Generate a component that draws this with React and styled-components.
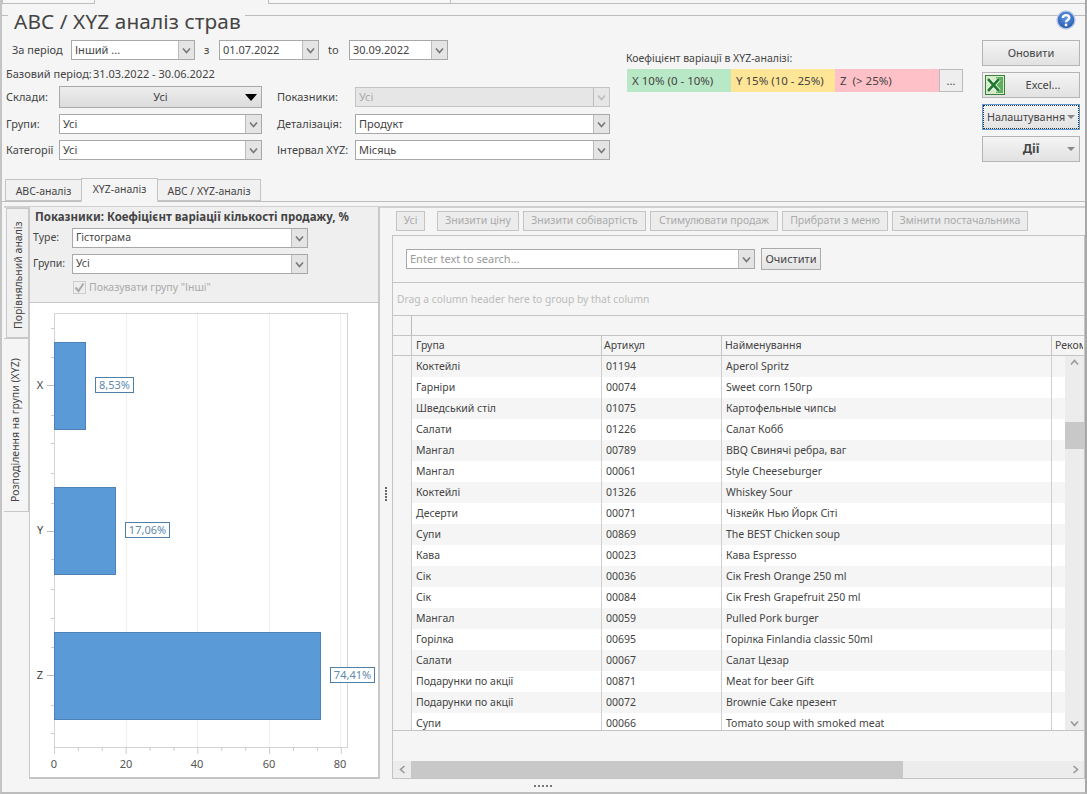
import React from "react";
import styled, { createGlobalStyle } from "styled-components";

const Global = createGlobalStyle`
  html, body { margin: 0; padding: 0; background: #f5f5f5; }
  body { font-family: "Noto Sans", "Liberation Sans", sans-serif; font-size: 11px; color: #444; }
  * { box-sizing: border-box; }
`;

const Page = styled.div`
  position: relative; width: 1087px; height: 794px; overflow: hidden; background: #f5f5f5;
  border-left: 2px solid #c4c4c4; border-right: 2px solid #a8a8a8; border-bottom: 2px solid #bdbdbd;
  display: flex; flex-direction: column;
`;
const TopStub = styled.div`height: 4px; display: flex;`;
const StubTab = styled.div`
  height: 4px; width: ${p => p.$w}px; margin-left: ${p => p.$ml || 0}px;
  border: 1px solid #bdbdbd; border-top: 0; background: #f7f7f7;
`;
const StubLine = styled.div`flex: 1; height: 4px; border-bottom: 1px solid #bdbdbd;`;
const Frame = styled.section`
  margin-top: 11px; border-top: 1px solid #bdbdbd; height: 164px; display: flex; flex-direction: column;
`;
const Title = styled.h1`
  margin: -9px 0 0 6px; padding: 0 4px 0 6px; width: fit-content; background: #f5f5f5;
  font-size: 20.8px; font-weight: 400; line-height: 28px; height: 28px; color: #444; letter-spacing: .1px;
  font-family: "Noto Sans", sans-serif;
`;
const Help = styled.svg`position: absolute; right: 9px; top: 10px;`;
const Top = styled.div`display: flex; padding-top: 5px;`;
const FormCol = styled.div`width: 624px; padding-left: 4px; display: flex; flex-direction: column;`;
const PeriodRow = styled.div`display: flex; align-items: center; height: 20px; padding-left: 6px;`;
const Lab = styled.span`
  width: ${p => p.$w}px; flex: none; white-space: nowrap; padding-left: ${p => p.$pl || 0}px; padding-bottom: 2px;
  margin-left: ${p => p.$ml || 0}px;
`;
const BaseRow = styled.div`display: flex; height: 14px; margin-top: 7px; align-items: center;`;
const FormGrid = styled.div`
  display: grid; grid-template-columns: 53px 203px 15px 78px 255px; grid-template-rows: 22px 20px 20px;
  row-gap: 6px; align-items: center; margin-top: 5px;
`;
const ComboBox = styled.div`
  width: ${p => (p.$w ? p.$w + "px" : "100%")}; height: 20px; display: flex; flex: none;
  border: 1px solid ${p => (p.$off ? "#c4c4c4" : "#a8a8a8")}; background: ${p => (p.$off ? "#e6e6e6" : "#fff")};
  color: ${p => (p.$off ? "#aaa" : p.$hint ? "#999" : "#444")};
`;
const ComboText = styled.span`flex: 1; padding-left: 3px; line-height: 17px; white-space: nowrap; overflow: hidden;`;
const ComboArrow = styled.span`
  width: 16px; flex: none; display: flex; align-items: center; justify-content: center;
  background: ${p => (p.$off ? "#e6e6e6" : "#e4e4e4")}; border-left: 1px solid #bbb;
`;
const Chev = ({ dir = "down", color = "#777" }) => (
  <svg width="9" height="9" viewBox="0 0 9 9">
    <path
      d={{ down: "M1 2.5 L4.5 6.5 L8 2.5", up: "M1 6.5 L4.5 2.5 L8 6.5", left: "M6.5 1 L2.5 4.5 L6.5 8", right: "M2.5 1 L6.5 4.5 L2.5 8" }[dir]}
      fill="none" stroke={color} strokeWidth="1.6"
    />
  </svg>
);
const Combo = ({ children, w, off, hint }) => (
  <ComboBox $w={w} $off={off} $hint={hint}>
    <ComboText>{children}</ComboText>
    <ComboArrow $off={off}><Chev color={off ? "#bbb" : "#777"} /></ComboArrow>
  </ComboBox>
);
const DropBtn = styled.div`
  height: 22px; border: 1px solid #a8a8a8; background: linear-gradient(#ededed, #dcdcdc);
  display: flex; align-items: center; justify-content: center; position: relative; padding-bottom: 1px;
`;
const BlackTri = styled.i`
  position: absolute; right: 4px; top: 7px; border: 6px solid transparent; border-top: 7px solid #000; border-bottom: 0;
`;
const LegendCol = styled.div`width: 356px; padding-top: 12px; flex: none;`;
const LegendLabel = styled.div`height: 17px; line-height: 13px; font-size: 10.5px;`;
const LegendBar = styled.div`display: flex; height: 23px; width: 337px; margin-left: 1px;`;
const LegendCell = styled.div`
  width: 104px; background: ${p => p.$bg}; line-height: 23px; padding-left: 5px; white-space: pre; font-size: 11.5px;
`;
const Dots = styled.div`
  width: 24px; border: 1px solid #bbb; background: #eee; text-align: center; line-height: 22px;
`;
const ButtonCol = styled.div`width: 98px; flex: none; display: flex; flex-direction: column; gap: 6px;`;
const Btn = styled.div`
  height: 26px; position: relative; display: flex; align-items: center; justify-content: center; padding-bottom: 2px;
  background: linear-gradient(#f4f4f4, #e2e2e2); border: 1px solid ${p => (p.$focus ? "#5b9bd5" : "#b4b4b4")};
  font-weight: ${p => (p.$bold ? 700 : 400)}; font-size: ${p => (p.$bold ? 12 : p.$focus ? 10.8 : 11)}px;
  ${p => p.$focus && "outline: 1px dotted #333; outline-offset: -2px;"}
  ${p => p.$pad && "justify-content: flex-start; padding-left: 4px;"}
`;
const SmallTri = styled.i`
  position: absolute; right: 4px; top: 10px; border: 4px solid transparent; border-top: 4px solid #888; border-bottom: 0;
`;
const ExcelIcon = styled.svg`position: absolute; left: 2px; top: 2px;`;
const ExcelText = styled.span`padding-left: 24px;`;
const TabStrip = styled.div`
  height: 23px; display: flex; align-items: flex-end; padding-left: 3px; border-bottom: 1px solid #bdbdbd;
`;
const Tab = styled.div`
  height: ${p => (p.$on ? 24 : 22)}px; width: ${p => p.$w}px; border: 1px solid #c4c4c4; margin-bottom: ${p => (p.$on ? -1 : 0)}px;
  background: ${p => (p.$on ? "#f5f5f5" : "#f1f1f1")}; border-bottom-color: ${p => (p.$on ? "#f5f5f5" : "#c4c4c4")};
  text-align: center; line-height: ${p => (p.$on ? 21 : 22)}px; white-space: nowrap; margin-left: ${p => p.$ml || 0}px; font-size: 10.5px;
`;
const Body = styled.div`
  margin: 4px 0 0 2px; border-top: 2px solid #d0d0d0; height: 573px; display: flex;
`;
const VTabs = styled.div`width: 25px; flex: none; display: flex; flex-direction: column;`;
const VTab = styled.div`
  height: ${p => p.$h}px; width: ${p => (p.$on ? 25 : 23)}px; margin-left: ${p => (p.$on ? 0 : 2)}px;
  border: 1px solid #c8c8c8; border-right: ${p => (p.$on ? "0" : "1px solid #c8c8c8")};
  background: ${p => (p.$on ? "#f5f5f5" : "#f0f0f0")}; padding-bottom: ${p => p.$shift}px;
  writing-mode: vertical-rl; transform: rotate(180deg); text-align: center; line-height: 22px; white-space: nowrap;
  font-size: 10.5px;
`;
const LeftPanel = styled.div`
  width: 351px; height: 572px; flex: none; display: flex; flex-direction: column; border-right: 2px solid #c8c8c8; border-left: 1px solid #c8c8c8;
  border-bottom: 2px solid #c4c4c4; background: #efefef; margin-top: -1px; font-size: 10.5px;
`;
const PanelHead = styled.div`height: 96px; padding-left: 5px; border-bottom: 1px solid #c8c8c8; flex: none;`;
const PanelTitle = styled.div`font-weight: 700; height: 21px; line-height: 20px; font-size: 11.5px; white-space: nowrap;`;
const TypeRow = styled.div`display: flex; align-items: center; height: 20px; margin-bottom: 6px;`;
const CheckRow = styled.div`display: flex; align-items: center; gap: 3px; padding-left: 38px; color: #aaa; height: 14px; margin-top: 3px; white-space: nowrap;`;
const CheckBox = styled.span`
  width: 13px; height: 13px; border: 1px solid #ccc; background: #eee; display: flex; align-items: center; justify-content: center;
`;
const ChartWrap = styled.div`flex: 1; background: #fff; min-height: 0; overflow: hidden;`;
const Splitter = styled.div`width: 12px; flex: none; display: flex; align-items: center; justify-content: center;`;
const Dotted = styled.div`
  width: 2px; height: 14px; background: repeating-linear-gradient(#666 0 2px, transparent 2px 3px);
`;
const RightPane = styled.div`flex: 1; min-width: 0; height: 571px; display: flex; flex-direction: column; font-size: 10.5px;`;
const ActionBar = styled.div`display: flex; height: 27px; flex: none; padding: 3px 0 0 4px;`;
const ActBtn = styled.div`
  height: 20px; width: ${p => p.$w}px; margin-left: ${p => p.$ml || 0}px; flex: none; border: 1px solid #c4c4c4;
  background: #ececec; color: #aaa; text-align: center; line-height: 17px; white-space: nowrap;
`;
const GridFrame = styled.div`
  flex: 1; border: 1px solid #c4c4c4; display: flex; flex-direction: column; min-height: 0;
`;
const SearchRow = styled.div`
  height: 47px; flex: none; display: flex; align-items: flex-start; gap: 6px; padding: 13px 0 0 13px; border-bottom: 1px solid #c4c4c4; font-size: 11px;
`;
const ClearBtn = styled.div`
  width: 60px; height: 22px; margin-top: -1px; border: 1px solid #aaa; background: linear-gradient(#f4f4f4, #e4e4e4);
  text-align: center; line-height: 19px;
`;
const GroupPanel = styled.div`
  height: 33px; flex: none; padding-left: 4px; line-height: 33px; color: #bbb; border-bottom: 1px solid #c4c4c4; font-size: 10.3px;
`;
const BandRow = styled.div`height: 20px; flex: none; padding-left: 18px; border-bottom: 1px solid #c4c4c4;`;
const BandInner = styled.div`height: 100%; border-left: 1px solid #bbb;`;
const HeadRow = styled.div`
  height: 20px; flex: none; display: flex; padding-left: 18px; border-bottom: 1px solid #c4c4c4; overflow: hidden;
`;
const HeadCell = styled.div`
  width: ${p => p.$w}px; flex: none; border-left: 1px solid #c4c4c4; padding-left: ${p => p.$pl || 4}px; line-height: 18px; white-space: nowrap; overflow: hidden;
`;
const GridBody = styled.div`height: 375px; flex: none; display: flex; padding-left: 18px; border-bottom: 1px solid #c4c4c4; overflow: hidden;`;
const Rows = styled.div`width: 654px; flex: none; overflow: hidden;`;
const Row = styled.div`
  height: 21px; display: flex; background: ${p => (p.$odd ? "#f5f5f5" : "#fff")}; white-space: nowrap;
`;
const Cell = styled.div`
  width: ${p => p.$w}px; flex: none; border-left: 1px solid #cfcfcf; padding-left: 4px; line-height: 20px; overflow: hidden;
`;
const VScroll = styled.div`flex: 1; background: #ececec; position: relative; display: flex; flex-direction: column; align-items: center; justify-content: space-between; padding: 2px 0;`;
const VThumb = styled.div`position: absolute; left: 0; right: 0; top: 66px; height: 27px; background: #c8c8c8;`;
const HGap = styled.div`flex: 1;`;
const HScroll = styled.div`height: 17px; flex: none; background: #ececec; display: flex; align-items: center;`;
const HArrow = styled.div`width: 18px; flex: none; display: flex; justify-content: center;`;
const HThumb = styled.div`width: 492px; height: 100%; background: #c8c8c8; flex: none;`;
const BottomGrip = styled.div`flex: 1; display: flex; justify-content: center; padding-top: 6px;`;
const HDots = styled.div`
  width: 19px; height: 2px; background: repeating-linear-gradient(90deg, #777 0 2px, transparent 2px 4px);
`;

const rows = [
  ["Коктейлі", "01194", "Aperol Spritz"], ["Гарніри", "00074", "Sweet corn  150гр"], ["Шведський стіл", "01075", "Картофельные чипсы"],
  ["Салати", "01226", "Салат Кобб"], ["Мангал", "00789", "BBQ Свинячі ребра, ваг"], ["Мангал", "00061", "Style Cheeseburger"],
  ["Коктейлі", "01326", "Whiskey Sour"], ["Десерти", "00071", "Чізкейк Нью Йорк Сіті"], ["Супи", "00869", "The BEST Chicken soup"],
  ["Кава", "00023", "Кава Espresso"], ["Сік", "00036", "Сік Fresh Orange 250 ml"], ["Сік", "00084", "Сік Fresh Grapefruit 250 ml"],
  ["Мангал", "00059", "Pulled Pork burger"], ["Горілка", "00695", "Горілка Finlandia classic 50ml"], ["Салати", "00067", "Салат Цезар"],
  ["Подарунки по акції", "00871", "Meat for beer Gift"], ["Подарунки по акції", "00072", "Brownie Cake презент"], ["Супи", "00066", "Tomato soup with smoked meat"],
];

const bars = [
  { l: "X", y: 39, w: 31, v: "8,53%", bx: 65, bw: 38 },
  { l: "Y", y: 184, w: 61, v: "17,06%", bx: 95, bw: 44 },
  { l: "Z", y: 329, w: 266, v: "74,41%", bx: 300, bw: 44 },
];
const xs = [[24, "0"], [96, "20"], [167, "40"], [239, "60"], [310, "80"]];
const leftTicks = [25, 54, 82, 112, 140, 170, 200, 228, 256, 286, 315, 344, 372, 402, 430];

const Chart = () => (
  <svg width="348" height="474" viewBox="0 0 348 474" style={{ display: "block" }} fontFamily="Noto Sans, sans-serif" fontSize="11">
    <rect x="24.5" y="10.5" width="293" height="434" fill="#fff" stroke="#d4d4d4" />
    {xs.slice(1).map(([x]) => <line key={x} x1={x + .5} x2={x + .5} y1="11" y2="444" stroke="#efefef" />)}
    {leftTicks.map(y => <line key={y} x1="21" x2="24" y1={y + .5} y2={y + .5} stroke="#ccc" />)}
    {[82, 228, 372].map(y => <line key={y} x1="17" x2="24" y1={y + .5} y2={y + .5} stroke="#bbb" />)}
    {Array.from({ length: 13 }).map((_, i) => {
      const x = 24 + i * 23.9;
      return <line key={i} x1={x + .5} x2={x + .5} y1="444" y2={i % 3 === 0 ? 451 : 448} stroke="#ccc" />;
    })}
    {bars.map(b => (
      <g key={b.l}>
        <rect x="24.5" y={b.y + .5} width={b.w} height="87" fill="#5a9ad6" stroke="#4f82b4" />
        <text x="10" y={b.y + 47} textAnchor="middle" fill="#444">{b.l}</text>
        <rect x={b.bx + .5} y={b.y + 35.5} width={b.bw} height="15" fill="#fff" stroke="#4f7fa6" />
        <text x={b.bx + b.bw / 2 + .5} y={b.y + 47} textAnchor="middle" fill="#5f8aac">{b.v}</text>
      </g>
    ))}
    {xs.map(([x, t]) => <text key={t} x={x} y="465" textAnchor="middle" fill="#555">{t}</text>)}
  </svg>
);

export default function App() {
  return (
    <Page>
      <Global />
      <TopStub>
        <StubTab $w={93} />
        <StubTab $ml={173} $w={183} />
        <StubLine />
      </TopStub>
      <Frame>
        <Title>ABC / XYZ аналіз страв</Title>
        <Help width="20" height="20" viewBox="0 0 20 20">
          <defs>
            <radialGradient id="helpBall" cx="50%" cy="35%" r="65%">
              <stop offset="0" stopColor="#5f9be8" />
              <stop offset="1" stopColor="#2657ad" />
            </radialGradient>
          </defs>
          <circle cx="10" cy="10" r="9" fill="url(#helpBall)" stroke="#b9c9e6" strokeWidth="1.4" />
          <path d="M6.8 8 C6.8 4.2 13.2 4.2 13.2 8 C13.2 10 10 10 10 12.2" fill="none" stroke="#fff" strokeWidth="2.4" />
          <circle cx="10" cy="15" r="1.4" fill="#fff" />
        </Help>
        <Top>
          <FormCol>
            <PeriodRow>
              <Lab $w={59}>За період</Lab>
              <Combo w={124}>Інший ...</Combo>
              <Lab $w={24} $pl={9}>з</Lab>
              <Combo w={100}>01.07.2022</Combo>
              <Lab $w={30} $pl={9}>to</Lab>
              <Combo w={99}>30.09.2022</Combo>
            </PeriodRow>
            <BaseRow>
              <Lab $w={87}>Базовий період:</Lab>
              <Lab>31.03.2022 - 30.06.2022</Lab>
            </BaseRow>
            <FormGrid>
              <Lab>Склади:</Lab>
              <DropBtn>Усі<BlackTri /></DropBtn>
              <span />
              <Lab>Показники:</Lab>
              <Combo off>Усі</Combo>
              <Lab>Групи:</Lab>
              <Combo>Усі</Combo>
              <span />
              <Lab>Деталізація:</Lab>
              <Combo>Продукт</Combo>
              <Lab>Категорії</Lab>
              <Combo>Усі</Combo>
              <span />
              <Lab>Інтервал XYZ:</Lab>
              <Combo>Місяць</Combo>
            </FormGrid>
          </FormCol>
          <LegendCol>
            <LegendLabel>Коефіцієнт варіації в XYZ-аналізі:</LegendLabel>
            <LegendBar>
              <LegendCell $bg="#b9e8c6">X 10% (0 - 10%)</LegendCell>
              <LegendCell $bg="#ffe596">Y 15% (10 - 25%)</LegendCell>
              <LegendCell $bg="#ffc1c8">Z  (&gt; 25%)</LegendCell>
              <Dots>...</Dots>
            </LegendBar>
          </LegendCol>
          <ButtonCol>
            <Btn>Оновити</Btn>
            <Btn>
              <ExcelIcon width="20" height="20" viewBox="0 0 20 20">
                <rect x=".5" y=".5" width="19" height="19" fill="#d6ecc8" stroke="#3b7f3b" />
                <rect x="11" y="2" width="7" height="16" fill="#5fae5f" />
                <path d="M3 4 L14 16 M14 4 L3 16" stroke="#fff" strokeWidth="4.2" />
                <path d="M3 4 L14 16 M14 4 L3 16" stroke="#1f7a30" strokeWidth="2.6" />
              </ExcelIcon>
              <ExcelText>Excel...</ExcelText>
            </Btn>
            <Btn $focus $pad>Налаштування<SmallTri /></Btn>
            <Btn $bold>Дії<SmallTri /></Btn>
          </ButtonCol>
        </Top>
      </Frame>
      <TabStrip>
        <Tab $w={77}>ABC-аналіз</Tab>
        <Tab $on $w={77} $ml={-1}>XYZ-аналіз</Tab>
        <Tab $w={104} $ml={-1}>ABC / XYZ-аналіз</Tab>
      </TabStrip>
      <Body>
        <VTabs>
          <VTab $h={130} $shift={5}>Порівняльний аналіз</VTab>
          <VTab $on $h={174} $shift={10}>Розподілення на групи (XYZ)</VTab>
        </VTabs>
        <LeftPanel>
          <PanelHead>
            <PanelTitle>Показники: Коефіцієнт варіації кількості продажу, %</PanelTitle>
            <TypeRow><Lab $w={39} $ml={-2}>Type:</Lab><Combo w={236}>Гістограма</Combo></TypeRow>
            <TypeRow><Lab $w={39} $ml={-2}>Групи:</Lab><Combo w={236}>Усі</Combo></TypeRow>
            <CheckRow>
              <CheckBox>
                <svg width="11" height="11" viewBox="0 0 11 11"><path d="M1.5 5.5 L4.5 9 L9.5 1.5" fill="none" stroke="#aaa" strokeWidth="2" /></svg>
              </CheckBox>
              Показувати групу "Інші"
            </CheckRow>
          </PanelHead>
          <ChartWrap><Chart /></ChartWrap>
        </LeftPanel>
        <Splitter><Dotted /></Splitter>
        <RightPane>
          <ActionBar>
            <ActBtn $w={29}>Усі</ActBtn>
            <ActBtn $ml={12} $w={82}>Знизити ціну</ActBtn>
            <ActBtn $ml={4} $w={123}>Знизити собівартість</ActBtn>
            <ActBtn $ml={4} $w={128}>Стимулювати продаж</ActBtn>
            <ActBtn $ml={4} $w={106}>Прибрати з меню</ActBtn>
            <ActBtn $ml={4} $w={136}>Змінити постачальника</ActBtn>
          </ActionBar>
          <GridFrame>
            <SearchRow>
              <Combo w={349} hint>Enter text to search...</Combo>
              <ClearBtn>Очистити</ClearBtn>
            </SearchRow>
            <GroupPanel>Drag a column header here to group by that column</GroupPanel>
            <BandRow><BandInner /></BandRow>
            <HeadRow>
              <HeadCell $w={190}>Група</HeadCell>
              <HeadCell $w={120} $pl={2}>Артикул</HeadCell>
              <HeadCell $w={330} $pl={3}>Найменування</HeadCell>
              <HeadCell $w={32} $pl={3}>Реком</HeadCell>
            </HeadRow>
            <GridBody>
              <Rows>
                {rows.map((r, i) => (
                  <Row key={r[1]} $odd={i % 2 === 0}>
                    <Cell $w={190}>{r[0]}</Cell>
                    <Cell $w={120}>{r[1]}</Cell>
                    <Cell $w={330}>{r[2]}</Cell>
                    <Cell $w={14} />
                  </Row>
                ))}
              </Rows>
              <VScroll>
                <Chev dir="up" color="#999" />
                <VThumb />
                <Chev dir="down" color="#999" />
              </VScroll>
            </GridBody>
            <HGap />
            <HScroll>
              <HArrow><Chev dir="left" color="#999" /></HArrow>
              <HThumb />
              <HGap />
              <HArrow><Chev dir="right" color="#999" /></HArrow>
            </HScroll>
          </GridFrame>
        </RightPane>
      </Body>
      <BottomGrip><HDots /></BottomGrip>
    </Page>
  );
}
